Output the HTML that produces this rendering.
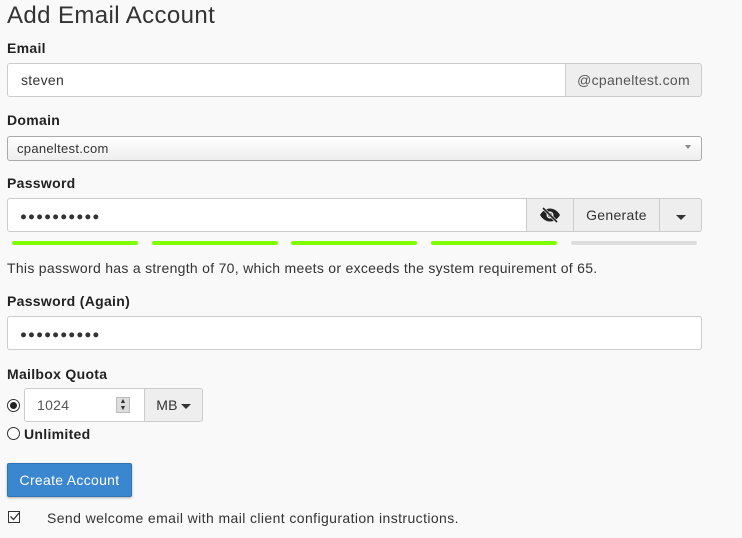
<!DOCTYPE html>
<html><head><style>
body{margin:0;width:742px;height:538px;background:#f9f9f9;font-family:"Liberation Sans","DejaVu Sans",sans-serif;color:#333;position:relative;overflow:hidden;letter-spacing:0.3px}
.a{position:absolute}
.lbl{font-weight:bold;font-size:14px;color:#222}
.inp{background:#fff;border:1px solid #ccc;box-sizing:border-box;border-radius:3px}
.btn{background:#eee;border:1px solid #ccc;box-sizing:border-box;display:flex;align-items:center;justify-content:center;font-size:14px;color:#333}
.bar{top:241px;height:4px;width:126px;border-radius:2px;background:#80ff00}
.dots{font-size:11.5px;letter-spacing:1.1px;color:#333}
</style></head><body>
<div class="a" style="left:7px;top:2px;font-size:24px;color:#333;letter-spacing:0.4px">Add Email Account</div>
<div class="a lbl" style="left:7px;top:40px">Email</div>
<div class="a inp" style="left:7px;top:63px;width:559px;height:34px;border-radius:3px 0 0 3px;padding:8px 13px;font-size:14px">steven</div>
<div class="a btn" style="left:565px;top:63px;width:137px;height:34px;border-radius:0 3px 3px 0;color:#555">@cpaneltest.com</div>
<div class="a lbl" style="left:7px;top:112px">Domain</div>
<div class="a inp" style="left:7px;top:136px;width:695px;height:25px;background:linear-gradient(#fff,#eee);border-color:#aaa;font-size:13px;padding:4px 9px">cpaneltest.com</div>
<div class="a" style="left:685px;top:145px;border:3px solid transparent;border-top:4px solid #888"></div>
<div class="a lbl" style="left:7px;top:175px">Password</div>
<div class="a inp" style="left:7px;top:198px;width:520px;height:34px;border-radius:3px 0 0 3px;padding:8px 12px"><span class="dots">●●●●●●●●●●</span></div>
<div class="a btn" style="left:526px;top:198px;width:48px;height:34px">
<svg width="22" height="16" viewBox="0 0 22 16"><path d="M1 8C4 3 8 1.5 11 1.5S18 3 21 8C18 13 14 14.5 11 14.5S4 13 1 8Z" fill="#222"/><circle cx="11" cy="8" r="3.5" fill="#eee"/><circle cx="11" cy="8" r="2" fill="#222"/><path d="M4 1L18 15" stroke="#eee" stroke-width="3"/><path d="M4 1L18 15" stroke="#222" stroke-width="1.6"/></svg></div>
<div class="a btn" style="left:573px;top:198px;width:87px;height:34px">Generate</div>
<div class="a btn" style="left:659px;top:198px;width:43px;height:34px;border-radius:0 3px 3px 0"><span style="border:5px solid transparent;border-top:5px solid #333;margin-top:5px;border-bottom:0"></span></div>
<div class="a bar" style="left:12px"></div>
<div class="a bar" style="left:152px"></div>
<div class="a bar" style="left:291px"></div>
<div class="a bar" style="left:431px"></div>
<div class="a bar" style="left:571px;background:#ddd"></div>
<div class="a" style="left:7px;top:260px;font-size:14px;letter-spacing:0.29px">This password has a strength of 70, which meets or exceeds the system requirement of 65.</div>
<div class="a lbl" style="left:7px;top:293px">Password (Again)</div>
<div class="a inp" style="left:7px;top:316px;width:695px;height:34px;padding:8px 12px"><span class="dots">●●●●●●●●●●</span></div>
<div class="a lbl" style="left:7px;top:366px">Mailbox Quota</div>
<div class="a" style="left:7px;top:399px;width:11px;height:11px;border:1px solid #333;border-radius:50%;background:#fff"></div>
<div class="a" style="left:10px;top:402px;width:7px;height:7px;border-radius:50%;background:#222"></div>
<div class="a inp" style="left:24px;top:388px;width:121px;height:34px;border-radius:3px 0 0 3px;padding:8px 12px;font-size:14px;color:#555">1024</div>
<div class="a" style="left:116px;top:397px;width:14px;height:16px;background:#ddd;border:1px solid #bbb;box-sizing:border-box;font-size:7px;line-height:7px;text-align:center;color:#333;letter-spacing:0">▲<br>▼</div>
<div class="a btn" style="left:144px;top:388px;width:59px;height:34px;border-radius:0 3px 3px 0">MB<span style="border:5px solid transparent;border-top:5px solid #333;border-bottom:0;margin:2px 0 0 3px"></span></div>
<div class="a" style="left:7px;top:427px;width:11px;height:11px;border:1px solid #333;border-radius:50%;background:#fff"></div>
<div class="a lbl" style="left:24px;top:426px">Unlimited</div>
<div class="a" style="left:7px;top:463px;width:125px;height:34px;background:#3a87d0;border:1px solid #2f74b5;box-sizing:border-box;border-radius:2px;color:#fff;font-size:14px;display:flex;align-items:center;justify-content:center;box-shadow:0 1px 2px rgba(0,0,0,.3)">Create Account</div>
<div class="a" style="left:8px;top:511px;width:12px;height:12px;border:1px solid #333;box-sizing:border-box;background:#fff"></div>
<svg class="a" style="left:9px;top:511px" width="11" height="11"><path d="M1.5 5.5L4.5 8.5L10 2" stroke="#333" stroke-width="1.3" fill="none"/></svg>
<div class="a" style="left:47px;top:510px;font-size:14px;letter-spacing:0.4px">Send welcome email with mail client configuration instructions.</div>
</body></html>
